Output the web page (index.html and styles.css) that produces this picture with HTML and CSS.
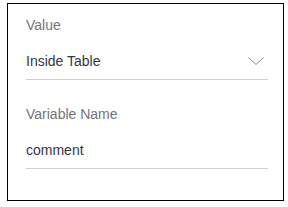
FILE: index.html
```html
<!DOCTYPE html>
<html lang="en">
<head>
    <meta charset="UTF-8">
    <meta name="viewport" content="width=device-width, initial-scale=1.0">
    <title>Properties</title>
    <link rel="stylesheet" href="styles.css">
</head>
<body>
    <div class="panel">
        <!-- Value select -->
        <div class="field">
            <div class="field-label">Value</div>
            <div class="field-input">
                <span>Inside Table</span>
                <svg class="chevron" width="16" height="9" viewBox="0 0 16 9">
                    <polyline points="0.5,0.5 8,7.5 15.5,0.5" fill="none" stroke="#8a8a8a" stroke-width="1"/>
                </svg>
            </div>
        </div>

        <!-- Variable name -->
        <div class="field">
            <div class="field-label">Variable Name</div>
            <div class="field-input">
                <span>comment</span>
            </div>
        </div>
    </div>
</body>
</html>
```

FILE: styles.css
```css
body {
    margin: 0;
    background-color: #fff;
    font-family: "Liberation Sans", Arial, sans-serif;
    font-size: 14px;
}

.panel {
    box-sizing: border-box;
    width: 277px;
    height: 198px;
    margin: 3px 0 0 7px;
    padding: 11px 15px 0 18px;
    border: 1px solid #000;
}

.field + .field {
    margin-top: 24px;
}

.field-label {
    line-height: 20px;
    color: #757575;
}

.field-input {
    display: flex;
    align-items: center;
    justify-content: space-between;
    margin-top: 16px;
    padding-bottom: 8px;
    line-height: 20px;
    color: #34344a;
    border-bottom: 1px solid #d0d0d0;
}

.chevron {
    margin-right: 4px;
}
```
